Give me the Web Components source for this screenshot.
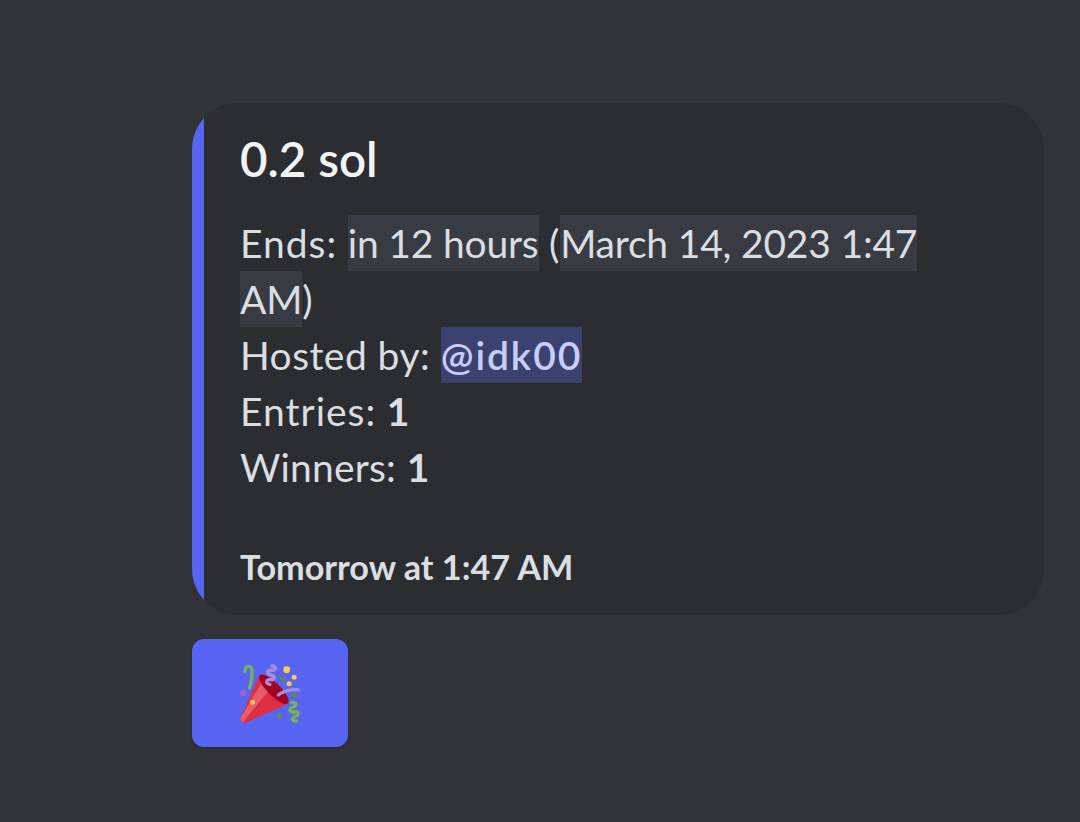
<!DOCTYPE html>
<html>
<head>
<meta charset="utf-8">
<title>Giveaway</title>
<style>
html, body {
	margin: 0;
	height: 100%;
	background: #313338;
}
body {
	font-family: "Lato", "Noto Sans", sans-serif;
	padding: 103px 36px 0 192px;
	box-sizing: border-box;
	display: flex;
	flex-direction: column;
	align-items: flex-start;
	gap: 24px;
}
.tight {
	letter-spacing: .2px;
}
.host {
	letter-spacing: .45px;
}
.wide {
	letter-spacing: 1px;
}
</style>
</head>
<body>

<giveaway-embed>
	<span slot="title">0.2 sol</span>
	<span class="wide">Ends:</span> <discord-time>in 12 hours</discord-time> (<discord-time>March 14, 2023 1:47</discord-time><br>
	<discord-time>AM</discord-time>)<br>
	<span class="host">Hosted by:</span> <discord-mention>@idk00</discord-mention><br>
	<span class="wide">Entries:</span> <b>1</b><br>
	<span class="tight">Winners:</span> <b>1</b>
	<span slot="footer">Tomorrow at 1:47 AM</span>
</giveaway-embed>

<emoji-button></emoji-button>

<script>
class GiveawayEmbed extends HTMLElement{

	connectedCallback(){

		this.attachShadow({mode: "open"});

		this.shadowRoot.innerHTML = `
<style>
:host {
	display: block;
	box-sizing: border-box;
	width: 852px;
	height: 512px;
	padding: 28px 48px 0 48px;
	background: #2b2d31;
	border-radius: 46px;
	position: relative;
	overflow: hidden;
	color: #dbdee1;
}
:host::before {
	content: "";
	position: absolute;
	left: 0;
	top: 0;
	bottom: 0;
	width: 12px;
	background: #5865f2;
}
.title {
	font-size: 47.5px;
	font-weight: 600;
	line-height: 56px;
	color: #f2f3f5;
}
.body {
	margin-top: 28px;
	font-size: 39px;
	line-height: 56px;
	font-weight: 400;
	letter-spacing: .6px;
}
.footer {
	margin-top: 48px;
	font-size: 34.2px;
	font-weight: 700;
	line-height: 48px;
}
</style>
<div class="title"><slot name="title"></slot></div>
<div class="body"><slot></slot></div>
<div class="footer"><slot name="footer"></slot></div>
		`;

	}

}

class DiscordTime extends HTMLElement{

	connectedCallback(){

		this.attachShadow({mode: "open"});

		this.shadowRoot.innerHTML = `
<style>
:host {
	display: inline-block;
	background: #383b42;
	line-height: 56px;
	letter-spacing: -.2px;
}
</style>
<slot></slot>
		`;

	}

}

class DiscordMention extends HTMLElement{

	connectedCallback(){

		this.attachShadow({mode: "open"});

		this.shadowRoot.innerHTML = `
<style>
:host {
	display: inline-block;
	background: #3c4270;
	color: #c9cdfb;
	font-weight: 600;
	line-height: 56px;
	letter-spacing: 1.9px;
}
</style>
<slot></slot>
		`;

	}

}

class EmojiButton extends HTMLElement{

	connectedCallback(){

		this.attachShadow({mode: "open"});

		this.shadowRoot.innerHTML = `
<style>
:host {
	display: flex;
	align-items: center;
	justify-content: center;
	width: 156px;
	height: 108px;
	background: #5865f2;
	border-radius: 12px;
	box-shadow: 0 1px 2px rgba(0, 0, 0, .25);
}
svg {
	width: 60px;
	height: 60px;
	display: block;
}
</style>
<svg viewBox="0 0 36 36">
	<path fill="#DD2E44" d="M11.626 7.488c-.112.112-.197.247-.268.395l-.008-.008L.134 33.141l.011.011c-.208.403.14 1.223.853 1.937.713.713 1.533 1.061 1.936.853l.01.01L28.21 24.735l-.008-.009c.147-.07.282-.155.395-.269 1.562-1.562-.971-6.627-5.656-11.313-4.687-4.686-9.752-7.218-11.315-5.656z"/>
	<path fill="#EA596E" d="M13 12L.416 32.506l-.282.635.011.011c-.208.403.14 1.223.853 1.937.232.232.473.408.709.557L17 17l-4-5z"/>
	<path fill="#A0041E" d="M23.012 13.066c4.67 4.672 7.263 9.652 5.789 11.124-1.473 1.474-6.453-1.118-11.126-5.788-4.671-4.672-7.263-9.654-5.79-11.127 1.474-1.473 6.454 1.119 11.127 5.791z"/>
	<path fill="#AA8DD8" d="M18.59 13.609c-.199.161-.459.245-.734.215-.868-.094-1.598-.396-2.109-.873-.541-.505-.808-1.183-.735-1.862.128-1.192 1.324-2.286 3.363-2.066.793.085 1.147-.17 1.159-.292.014-.121-.277-.446-1.07-.532-.868-.094-1.598-.396-2.11-.873-.541-.505-.809-1.183-.735-1.862.13-1.192 1.325-2.286 3.362-2.065.578.062.883-.057 1.012-.134.103-.063.144-.123.148-.158.012-.121-.275-.446-1.07-.532-.549-.06-.947-.552-.886-1.102.059-.549.55-.946 1.101-.886 2.037.219 2.973 1.542 2.844 2.735-.13 1.194-1.325 2.286-3.364 2.067-.578-.063-.88.057-1.01.134-.103.062-.145.123-.149.157-.013.122.276.446 1.071.532 2.037.22 2.973 1.542 2.844 2.735-.129 1.192-1.324 2.286-3.362 2.065-.578-.062-.882.058-1.012.134-.104.064-.144.124-.148.158-.013.121.276.446 1.07.532.548.06.947.553.886 1.102-.028.274-.167.511-.366.671z"/>
	<path fill="#77B255" d="M30.661 22.857c1.973-.557 3.334.323 3.658 1.478.324 1.154-.378 2.615-2.35 3.17-.77.216-1.001.584-.97.701.034.118.425.312 1.193.095 1.972-.555 3.333.325 3.657 1.479.326 1.155-.378 2.614-2.351 3.17-.769.216-1.001.585-.967.702.033.117.423.311 1.192.095.53-.149 1.084.16 1.233.691.148.532-.161 1.084-.693 1.234-1.971.555-3.333-.323-3.659-1.479-.324-1.154.379-2.613 2.353-3.169.77-.217 1.001-.584.967-.702-.032-.117-.422-.312-1.19-.096-1.974.556-3.334-.322-3.659-1.479-.325-1.154.378-2.613 2.351-3.17.768-.215.999-.585.967-.701-.034-.118-.423-.312-1.192-.096-.532.15-1.083-.16-1.233-.691-.149-.53.161-1.082.693-1.232z"/>
	<path fill="#AA8DD8" d="M23.001 20.16c-.294 0-.584-.129-.782-.375-.345-.432-.274-1.061.156-1.406.218-.175 5.418-4.259 12.767-3.208.547.078.927.584.849 1.131-.078.546-.58.93-1.132.848-6.493-.922-11.187 2.754-11.233 2.791-.186.148-.406.219-.625.219z"/>
	<path fill="#77B255" d="M5.754 16c-.095 0-.192-.014-.288-.042-.529-.159-.829-.716-.67-1.245 1.133-3.773 2.16-9.794.898-11.364-.141-.178-.354-.353-.842-.316-.938.072-.849 2.051-.848 2.071.042.551-.372 1.031-.922 1.072-.559.034-1.031-.372-1.072-.923-.103-1.379.326-4.035 2.692-4.214 1.056-.08 1.933.287 2.552 1.057 2.371 2.951-.036 11.506-.542 13.192-.13.433-.528.712-.958.712z"/>
	<circle fill="#5C913B" cx="25.5" cy="9.5" r="1.5"/>
	<circle fill="#9266CC" cx="2" cy="18" r="2"/>
	<circle fill="#5C913B" cx="32.5" cy="19.5" r="1.5"/>
	<circle fill="#5C913B" cx="23.5" cy="31.5" r="1.5"/>
	<circle fill="#FFCC4D" cx="28" cy="4" r="2"/>
	<circle fill="#FFCC4D" cx="32.5" cy="8.5" r="1.5"/>
	<circle fill="#FFCC4D" cx="29.5" cy="12.5" r="1.5"/>
	<circle fill="#FFCC4D" cx="7.5" cy="23.5" r="1.5"/>
</svg>
		`;

	}

}

customElements.define("giveaway-embed", GiveawayEmbed);
customElements.define("discord-time", DiscordTime);
customElements.define("discord-mention", DiscordMention);
customElements.define("emoji-button", EmojiButton);
</script>
</body>
</html>
